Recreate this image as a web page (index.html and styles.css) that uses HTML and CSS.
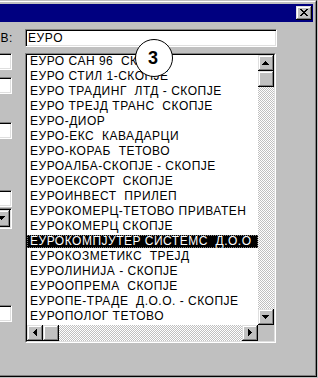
FILE: index.html
```html
<!DOCTYPE html>
<html lang="mk">

<head>
    <meta charset="UTF-8" />
    <title>Избор на фирма</title>
    <link rel="stylesheet" href="styles.css">
</head>

<body>
    <div class="window">
        <div class="frame">
            <div class="titlebar">
                <div class="close">
                    <svg width="16" height="14" viewBox="0 0 16 14" shape-rendering="crispEdges">
                        <path d="M4 3h2v1H4z M10 3h2v1h-2z M5 4h2v1H5z M9 4h2v1H9z M6 5h4v1H6z M7 6h2v1H7z M6 7h4v1H6z M5 8h2v1H5z M9 8h2v1H9z M4 9h2v1H4z M10 9h2v1h-2z" fill="#000" />
                    </svg>
                </div>
            </div>
            <div class="content">
                <div class="side">
                    <div class="label"><span>В:</span></div>
                    <div class="field f1"></div>
                    <div class="field f2"></div>
                    <div class="field f3"></div>
                    <div class="field f4"></div>
                    <div class="combo">
                        <div class="btn combo-btn">
                            <svg width="16" height="16" viewBox="0 0 16 16" shape-rendering="crispEdges"><path d="M4 6h7v1H4z M5 7h5v1H5z M6 8h3v1H6z M7 9h1v1H7z" fill="#000" /></svg>
                        </div>
                    </div>
                    <div class="field f6"></div>
                </div>
                <div class="main">
                    <div class="search"><span>ЕУРО</span></div>
                    <div class="listbox">
                        <div class="list-inner">
                            <div class="list-row">
                                <ul class="items">
                                    <li>ЕУРО САН 96  СКОПЈЕ</li>
                                    <li>ЕУРО СТИЛ 1-СКОПЈЕ</li>
                                    <li>ЕУРО ТРАДИНГ  ЛТД - СКОПЈЕ</li>
                                    <li>ЕУРО ТРЕЈД ТРАНС  СКОПЈЕ</li>
                                    <li>ЕУРО-ДИОР</li>
                                    <li>ЕУРО-ЕКС  КАВАДАРЦИ</li>
                                    <li>ЕУРО-КОРАБ  ТЕТОВО</li>
                                    <li>ЕУРОАЛБА-СКОПЈЕ - СКОПЈЕ</li>
                                    <li>ЕУРОЕКСОРТ  СКОПЈЕ</li>
                                    <li>ЕУРОИНВЕСТ  ПРИЛЕП</li>
                                    <li>ЕУРОКОМЕРЦ-ТЕТОВО ПРИВАТЕН</li>
                                    <li>ЕУРОКОМЕРЦ СКОПЈЕ</li>
                                    <li class="selected">ЕУРОКОМПЈУТЕР СИСТЕМС  Д.О.О</li>
                                    <li>ЕУРОКОЗМЕТИКС  ТРЕЈД</li>
                                    <li>ЕУРОЛИНИЈА - СКОПЈЕ</li>
                                    <li>ЕУРООПРЕМА  СКОПЈЕ</li>
                                    <li>ЕУРОПЕ-ТРАДЕ  Д.О.О. - СКОПЈЕ</li>
                                    <li>ЕУРОПОЛОГ ТЕТОВО</li>
                                </ul>
                                <div class="vscroll">
                                    <div class="btn">
                                        <svg width="16" height="16" viewBox="0 0 16 16" shape-rendering="crispEdges"><path d="M7 6h1v1H7z M6 7h3v1H6z M5 8h5v1H5z M4 9h7v1H4z" fill="#000" /></svg>
                                    </div>
                                    <div class="btn"></div>
                                    <div class="track"></div>
                                    <div class="btn">
                                        <svg width="16" height="16" viewBox="0 0 16 16" shape-rendering="crispEdges"><path d="M4 6h7v1H4z M5 7h5v1H5z M6 8h3v1H6z M7 9h1v1H7z" fill="#000" /></svg>
                                    </div>
                                </div>
                            </div>
                            <div class="hrow">
                                <div class="hscroll">
                                    <div class="btn">
                                        <svg width="16" height="16" viewBox="0 0 16 16" shape-rendering="crispEdges"><path d="M6 7h1v1H6z M7 6h1v3H7z M8 5h1v5H8z M9 4h1v7H9z" fill="#000" /></svg>
                                    </div>
                                    <div class="btn"></div>
                                    <div class="track"></div>
                                    <div class="btn">
                                        <svg width="16" height="16" viewBox="0 0 16 16" shape-rendering="crispEdges"><path d="M6 4h1v7H6z M7 5h1v5H7z M8 6h1v3H8z M9 7h1v1H9z" fill="#000" /></svg>
                                    </div>
                                </div>
                                <div class="corner"></div>
                            </div>
                        </div>
                    </div>
                    <div class="marker">3</div>
                </div>
            </div>
        </div>
    </div>
</body>

</html>
```

FILE: styles.css
```css
body {
    margin: 0;
    background: #c0c0c0;
    font-family: "Liberation Sans", Arial, sans-serif;
    font-size: 12px;
    color: #000;
    overflow: hidden;
}

.window {
    width: 317px;
    height: 377px;
    box-sizing: border-box;
    border-top: 1px solid #c0c0c0;
    border-right: 1px solid #000;
    border-bottom: 1px solid #000;
}

.frame {
    height: 100%;
    box-sizing: border-box;
    border-top: 1px solid #fff;
    border-right: 1px solid #808080;
    border-bottom: 1px solid #808080;
    padding: 2px 2px 0 0;
}

.titlebar {
    height: 18px;
    background: #000080;
    display: flex;
    justify-content: flex-end;
    align-items: center;
    padding-right: 1px;
}

.close,
.btn {
    background: #c0c0c0;
    box-shadow: inset -1px -1px #000, inset 1px 1px #dfdfdf, inset -2px -2px #808080, inset 2px 2px #fff;
    flex-shrink: 0;
}

.close {
    width: 16px;
    height: 14px;
}

.btn {
    width: 16px;
    height: 16px;
}

svg {
    display: block;
}

.content {
    display: flex;
}

/* left column, mostly cut off by the window edge */
.side {
    width: 25px;
    display: flex;
    flex-direction: column;
    align-items: flex-start;
}

.label {
    margin-top: 7px;
    width: 13px;
    height: 18px;
    line-height: 18px;
    display: flex;
    justify-content: flex-end;
    white-space: nowrap;
    letter-spacing: 0.6px;
}

.field {
    width: 12px;
    height: 17px;
    box-sizing: border-box;
    background: #fff;
    border-top: 1px solid #808080;
    border-right: 1px solid #fff;
    border-bottom: 1px solid #fff;
    box-shadow: inset 0 1px #000, inset -1px -1px #dfdfdf;
}

.f1 { margin-top: 6px; }
.f2 { margin-top: 7px; }
.f3 { margin-top: 28px; }
.f4 { margin-top: 51px; }
.f6 { margin-top: 76px; }

.combo {
    margin-top: 1px;
    width: 12px;
    height: 21px;
    box-sizing: border-box;
    display: flex;
    justify-content: flex-end;
    border-top: 1px solid #808080;
    border-right: 1px solid #fff;
    border-bottom: 1px solid #fff;
    padding: 1px 1px 1px 0;
    box-shadow: inset 0 1px #000, inset -1px -1px #dfdfdf;
}

.combo-btn {
    height: 17px;
}

.main {
    width: 252px;
    position: relative;
}

.search {
    margin-top: 7px;
    height: 18px;
    box-sizing: border-box;
    background: #fff;
    border: 1px solid;
    border-color: #808080 #fff #fff #808080;
    box-shadow: inset 1px 1px #000, inset -1px -1px #dfdfdf;
    padding-left: 2px;
    line-height: 14px;
    padding-top: 1px;
    letter-spacing: 0.6px;
}

.listbox {
    margin-top: 6px;
    width: 251px;
    height: 290px;
    box-sizing: border-box;
    border: 1px solid;
    border-color: #808080 #fff #fff #808080;
}

.list-inner {
    height: 100%;
    box-sizing: border-box;
    border: 1px solid;
    border-color: #000 #dfdfdf #dfdfdf #000;
    background: #fff;
}

.list-row {
    display: flex;
    height: 270px;
}

.items {
    list-style: none;
    margin: 0;
    padding: 0;
    width: 231px;
    overflow: hidden;
}

.items li {
    height: 13px;
    line-height: 13px;
    margin-bottom: 2px;
    padding-left: 3px;
    white-space: pre;
    letter-spacing: 0.5px;
    overflow: hidden;
}

.items li.selected {
    background: #000;
    color: #fff;
    outline: 1px dotted #808080;
    outline-offset: -1px;
}

.vscroll,
.hscroll {
    display: flex;
    background: #c0c0c0;
}

.vscroll {
    flex-direction: column;
    width: 16px;
}

.hrow {
    display: flex;
    height: 16px;
}

.hscroll {
    width: 231px;
}

.track {
    flex: 1;
    background: repeating-conic-gradient(#c0c0c0 0 25%, #fff 0 50%) 0 0 / 2px 2px;
}

.corner {
    width: 16px;
    background: #c0c0c0;
}

/* annotation callout */
.marker {
    position: absolute;
    left: 110px;
    top: 17px;
    width: 38px;
    height: 38px;
    box-sizing: border-box;
    border: 1px solid #000;
    border-radius: 50%;
    background: #fff;
    display: flex;
    align-items: center;
    justify-content: center;
    padding-right: 2px;
    font-weight: bold;
    font-size: 18px;
}
```
